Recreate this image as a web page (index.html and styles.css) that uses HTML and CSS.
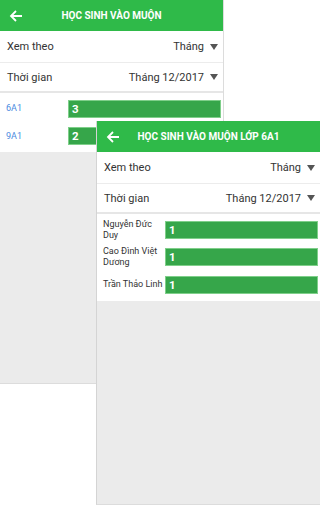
FILE: index.html
```html
<!DOCTYPE html>
<html lang="vi">
<head>
  <meta charset="UTF-8" />
  <meta name="viewport" content="width=device-width, initial-scale=1" />
  <title>Học sinh vào muộn</title>
  <link rel="stylesheet" href="styles.css">
</head>
<body>
  <div class="desk">
    <!-- Screen 1: by class -->
    <div class="screen screen-back">
      <div class="appbar">
        <svg class="back" width="14" height="14" viewBox="0 0 14 14"><path d="M13 7H2M7 2L2 7l5 5" fill="none" stroke="#fff" stroke-width="1.8"/></svg>
        <div class="appbar-title">HỌC SINH VÀO MUỘN</div>
      </div>
      <div class="filter filter-first">
        <span>Xem theo</span>
        <span class="pick">Tháng <i class="caret"></i></span>
      </div>
      <div class="filter">
        <span>Thời gian</span>
        <span class="pick">Tháng 12/2017 <i class="caret"></i></span>
      </div>
      <div class="chart">
        <div class="chart-row">
          <div class="label label-link">6A1</div>
          <div class="bar">3</div>
        </div>
        <div class="chart-row">
          <div class="label label-link">9A1</div>
          <div class="bar">2</div>
        </div>
      </div>
    </div>

    <!-- Screen 2: students of 6A1 -->
    <div class="screen screen-front">
      <div class="appbar">
        <svg class="back" width="14" height="14" viewBox="0 0 14 14"><path d="M13 7H2M7 2L2 7l5 5" fill="none" stroke="#fff" stroke-width="1.8"/></svg>
        <div class="appbar-title">HỌC SINH VÀO MUỘN LỚP 6A1</div>
      </div>
      <div class="filter filter-first">
        <span>Xem theo</span>
        <span class="pick">Tháng <i class="caret"></i></span>
      </div>
      <div class="filter">
        <span>Thời gian</span>
        <span class="pick">Tháng 12/2017 <i class="caret"></i></span>
      </div>
      <div class="chart">
        <div class="chart-row">
          <div class="label">Nguyễn Đức Duy</div>
          <div class="bar">1</div>
        </div>
        <div class="chart-row">
          <div class="label">Cao Đình Việt Dương</div>
          <div class="bar">1</div>
        </div>
        <div class="chart-row">
          <div class="label">Trần Thảo Linh</div>
          <div class="bar">1</div>
        </div>
      </div>
    </div>
  </div>
</body>
</html>
```

FILE: styles.css
```css
* {
  box-sizing: border-box;
}

body, html {
  margin: 0;
  padding: 0;
  background: #fff;
  font-family: Roboto, 'Noto Sans', Arial, sans-serif;
  color: #333;
}

.desk {
  position: relative;
  width: 320px;
  height: 507px;
}

/* phone screens */
.screen {
  width: 224px;
  height: 384px;
  background: #ebebeb;
  display: flex;
  flex-direction: column;
}

.screen-back {
  border-right: 1px solid #dcdcdc;
  border-bottom: 1px solid #dcdcdc;
}

.screen-front {
  position: absolute;
  left: 96px;
  top: 121px;
  border-left: 1px solid #d4d4d4;
  border-bottom: 1px solid #dcdcdc;
}

.appbar {
  height: 31px;
  background: #2fba49;
  display: flex;
  align-items: center;
  position: relative;
  flex-shrink: 0;
}

.back {
  margin-left: 9px;
}

.appbar-title {
  position: absolute;
  left: 0;
  right: 0;
  text-align: center;
  color: #fff;
  font-weight: 700;
  font-size: 10px;
  pointer-events: none;
}

/* filter rows */
.filter {
  background: #fff;
  height: 30px;
  display: flex;
  align-items: center;
  justify-content: space-between;
  padding: 0 5px 0 7px;
  font-size: 11px;
  color: #333;
  border-bottom: 2px solid #e6e6e6;
}

.filter-first {
  height: 32px;
  border-bottom: 1px solid #ececec;
}

.pick {
  display: flex;
  align-items: center;
}

.caret {
  display: inline-block;
  width: 0;
  height: 0;
  margin-left: 6px;
  border-left: 4.5px solid transparent;
  border-right: 4.5px solid transparent;
  border-top: 6px solid #555;
}

/* bar chart */
.chart {
  background: #fff;
  padding: 2px 2px 2px 6px;
}

.chart-row {
  height: 27.5px;
  display: flex;
  align-items: center;
}

.label {
  width: 62px;
  flex-shrink: 0;
  font-size: 9px;
  line-height: 11px;
  color: #333;
}

.label-link {
  color: #4a8be0;
}

.bar {
  flex: 1;
  height: 18px;
  background: #36a64a;
  border: 1px solid #7fcf8a;
  color: #fff;
  font-weight: 700;
  font-size: 11.5px;
  line-height: 16px;
  padding-left: 3px;
}
```
